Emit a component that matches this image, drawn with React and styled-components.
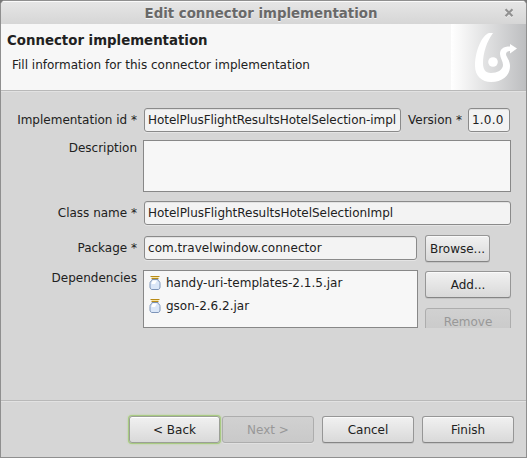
import React from "react";
import styled, { createGlobalStyle } from "styled-components";

const GlobalStyle = createGlobalStyle`
  *, *::before, *::after { box-sizing: border-box; }
  html, body { margin: 0; padding: 0; overflow: hidden; }
  body {
    background: #777;
    color: #212121;
    font: 12px/18px "DejaVu Sans", sans-serif;
  }
`;

const Window = styled.main`
  width: 527px;
  height: 458px;
  display: flex;
  flex-direction: column;
  border: 1px solid #8f8f8f;
  border-radius: 5px 5px 0 0;
  background: #d6d6d6;
  overflow: hidden;
`;

const TitleBar = styled.header`
  height: 23px;
  flex: none;
  display: grid;
  grid-template-columns: 34px 1fr 34px;
  align-items: center;
  background: linear-gradient(#e6e6e6, #d6d6d6);
  box-shadow: inset 0 1px #fafafa;
`;

const Title = styled.h1`
  grid-column: 2;
  margin: 0 0 0 -5px;
  padding-top: 2px;
  text-align: center;
  white-space: nowrap;
  font-size: 13.33px;
  line-height: 20px;
  font-weight: 700;
  color: #696969;
  text-shadow: 0 1px #f2f2f2;
`;

const CloseButton = styled.button`
  padding: 1px 0 0 0;
  border: 0;
  background: none;
  display: flex;
  justify-content: center;
`;

const Banner = styled.section`
  height: 66px;
  flex: none;
  display: flex;
  justify-content: space-between;
  background: #f7f7f7;
`;

const BannerText = styled.div`
  padding: 7px 0 0 6px;
  white-space: nowrap;
`;

const Heading = styled.h2`
  margin: 0;
  font-size: 13.33px;
  line-height: 20px;
  font-weight: 700;
`;

const Subtitle = styled.p`
  margin: 5px 0 0 5px;
`;

const Brand = styled.div`
  width: 75px;
  height: 66px;
  background: linear-gradient(90deg, #fff, #f8f8f8 12%, #bdbec0);
`;

const Separator = styled.hr`
  width: 100%;
  height: 2px;
  flex: none;
  margin: 0;
  border: 0;
  border-top: 1px solid #b9b9b9;
  border-bottom: 1px solid #e2e2e2;
`;

const Form = styled.form`
  height: 308px;
  padding: 16px 15px 0 0;
`;

const Row = styled.div`
  display: flex;
  align-items: flex-start;
  height: ${(p) => p.$height}px;
`;

const Label = styled.label`
  width: ${(p) => (p.$inline ? "66px" : "136px")};
  margin-right: ${(p) => (p.$inline ? 0 : 6)}px;
  padding-left: ${(p) => (p.$inline ? 7 : 0)}px;
  margin-top: ${(p) => p.$drop ?? 3}px;
  flex: none;
  text-align: ${(p) => (p.$inline ? "left" : "right")};
  white-space: nowrap;
`;

const Input = styled.input`
  height: 24px;
  width: ${(p) => p.$width}px;
  margin: 0 0 0 1px;
  padding: 0 3px 1px;
  flex: none;
  border: 1px solid #8a8a8a;
  border-radius: 3px;
  outline: 0;
  background: #f3f3f3;
  box-shadow: 0 1px #e4e4e4, inset 0 1px #e2e2e2;
  color: inherit;
  font: inherit;
  letter-spacing: ${(p) => p.$tracking ?? 0}px;
`;

const TextArea = styled.textarea`
  width: 368px;
  height: 52px;
  margin: 0;
  resize: none;
  border: 1px solid #888;
  outline: 0;
  background: #f7f7f7;
`;

const FileList = styled.ul`
  width: 275px;
  height: 58px;
  margin: 0;
  padding: 0 5px;
  list-style: none;
  border: 1px solid #888;
  background: #f7f7f7;
`;

const FileItem = styled.li`
  display: flex;
  align-items: center;
  gap: 5px;
  height: 23px;
`;

const Button = styled.button`
  width: ${(p) => p.$width ?? 86}px;
  height: 27px;
  flex: none;
  padding: 1px 0 0;
  border: 1px solid #969696;
  border-bottom-color: #858585;
  border-radius: 3px;
  background: linear-gradient(#f1f1f1, #d9d9d9);
  box-shadow: inset 0 1px #fafafa, 0 1px #c4c4c4;
  color: #212121;
  font: inherit;
  &:disabled {
    color: #989898;
    border-color: #adadad;
    background: linear-gradient(#d1d1d1, #c9c9c9);
    box-shadow: 0 1px #e0e0e0;
  }
  ${(p) => p.$active && "border-color: #9b9f96; box-shadow: inset 0 1px #fff, 0 0 0 1px #a8ca82, 0 0 2px 1px #b5d592;"}
`;

const ListActions = styled.div`
  display: flex;
  flex-direction: column;
  gap: 10px;
  height: 58px;
  margin-left: 7px;
  padding-top: 1px;
  overflow: hidden;
`;

const BrowseSlot = styled.div`
  margin: -1px 0 0 8px;
`;

const Footer = styled.footer`
  flex: 1;
  display: flex;
  justify-content: flex-end;
  gap: 8px;
  padding: 14px 12px 0 0;
`;

const Navigation = styled.div`
  display: flex;
  gap: 2px;
`;

function CloseIcon() {
  return (
    <svg width="10" height="10" viewBox="0 0 10 10">
      <path d="M1.5 2 8.5 9M8.5 2 1.5 9" stroke="#f4f4f4" strokeWidth="2.2" />
      <path d="M1.5 1.3 8.5 8.3M8.5 1.3 1.5 8.3" stroke="#929292" strokeWidth="2.2" />
    </svg>
  );
}

function BrandMark() {
  return (
    <svg width="75" height="66" viewBox="0 0 75 66">
      <path
        fill="#fff"
        d="M42 9H38C31 11 24 27 24 42C24 52 31 58 40 58C51 58 59 52 59 42C59 36 55 33 55 30C55 28 57 27 59 27V29.500L66 24.500 59 20V22.500C52 22.500 49 25 49 30C49 34 52 37 52 41C52 46 46 49 40 49C34 49 32 45 32 39C32 29 36 17 42 9Z"
      />
      <circle cx="42" cy="38" r="4.8" fill="#fff" />
    </svg>
  );
}

function JarIcon() {
  return (
    <svg width="12" height="16" viewBox="0 0 12 16">
      <path d="M3 4.500h6v1c1.500.7 2 1.500 2 3v3.500c0 1.500-1 2.500-2 2.500H3c-1 0-2-1-2-2.500V8.500c0-1.500.5-2.300 2-3z" fill="#dbe7f8" stroke="#7d94b8" />
      <path d="M3.500 5.500h4.500L6 9H2.500z" fill="#fff" />
      <path d="M1.500 1.500h9M2.500 3.500h7" stroke="#b98b16" />
      <path d="M2.500 2.500h7" stroke="#f6e5a8" />
    </svg>
  );
}

export default function App() {
  return (
    <>
      <GlobalStyle />
      <Window>
        <TitleBar>
          <Title>Edit connector implementation</Title>
          <CloseButton aria-label="Close"><CloseIcon /></CloseButton>
        </TitleBar>
        <Banner>
          <BannerText>
            <Heading>Connector implementation</Heading>
            <Subtitle>Fill information for this connector implementation</Subtitle>
          </BannerText>
          <Brand><BrandMark /></Brand>
        </Banner>
        <Separator />
        <Form>
          <Row $height={32}>
            <Label>Implementation id *</Label>
            <Input $width={257} $tracking={-0.06} defaultValue="HotelPlusFlightResultsHotelSelection-impl" />
            <Label $inline>Version *</Label>
            <Input $width={42} $tracking={0.2} defaultValue="1.0.0" />
          </Row>
          <Row $height={61}>
            <Label $drop={-1}>Description</Label>
            <TextArea />
          </Row>
          <Row $height={35}>
            <Label>Class name *</Label>
            <Input $width={367} $tracking={-0.03} defaultValue="HotelPlusFlightResultsHotelSelectionImpl" />
          </Row>
          <Row $height={34}>
            <Label>Package *</Label>
            <Input $width={273} $tracking={0.04} defaultValue="com.travelwindow.connector" />
            <BrowseSlot><Button type="button" $width={65}>Browse...</Button></BrowseSlot>
          </Row>
          <Row $height={58}>
            <Label $drop={-1}>Dependencies</Label>
            <FileList>
              <FileItem><JarIcon />handy-uri-templates-2.1.5.jar</FileItem>
              <FileItem><JarIcon />gson-2.6.2.jar</FileItem>
            </FileList>
            <ListActions>
              <Button type="button">Add...</Button>
              <Button type="button" disabled>Remove</Button>
            </ListActions>
          </Row>
        </Form>
        <Separator />
        <Footer>
          <Navigation>
            <Button $width={91} $active>&lt; Back</Button>
            <Button $width={92} disabled>Next &gt;</Button>
          </Navigation>
          <Button $width={92}>Cancel</Button>
          <Button $width={92}>Finish</Button>
        </Footer>
      </Window>
    </>
  );
}
